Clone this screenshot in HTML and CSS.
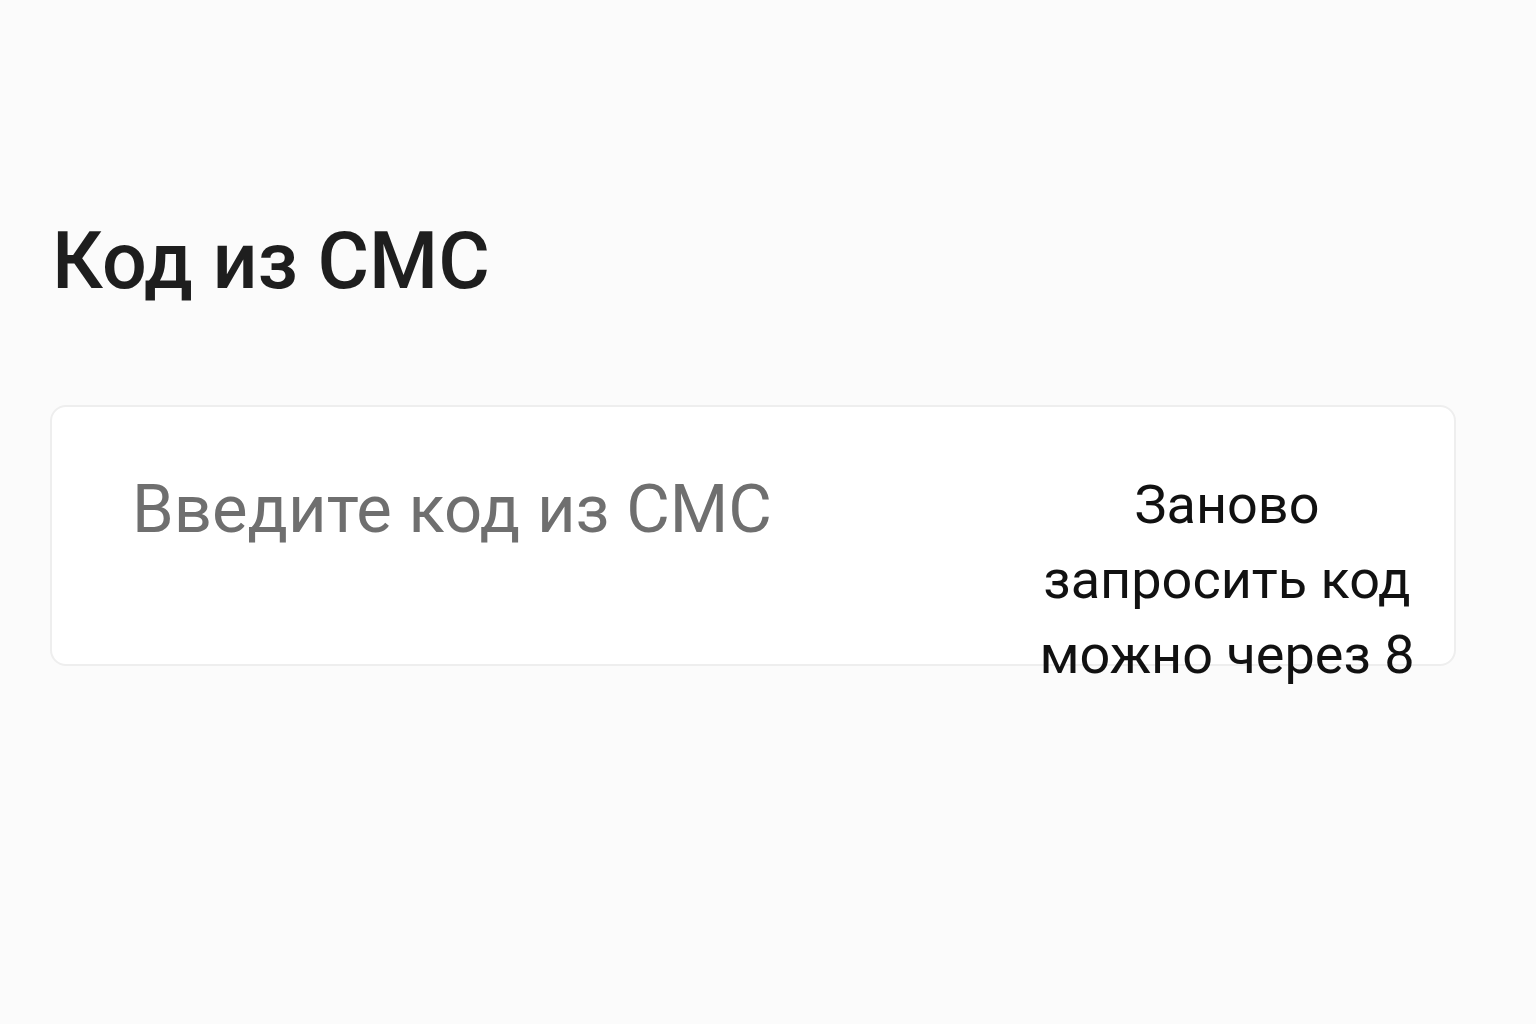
FILE: index.html
```html
<!DOCTYPE html>
<html lang="ru">
<head>
    <meta charset="UTF-8">
    <meta name="viewport" content="width=device-width, initial-scale=1.0">
    <title>Код из СМС</title>
    <link rel="stylesheet" href="styles.css">
</head>
<body>
    <main class="main">
        <h1 class="title">Код из СМС</h1>
        <div class="code-field">
            <div class="code-frame"></div>
            <div class="code-body">
                <input type="text" class="code-input" placeholder="Введите код из СМС">
                <div class="resend">Заново запросить код можно через 8</div>
            </div>
        </div>
    </main>
</body>
</html>
```

FILE: styles.css
```css
body {
    font-family: Roboto, 'Noto Sans', sans-serif;
    background-color: #fbfbfb;
    color: #1f1f1f;
    margin: 0;
}
.main {
    padding: 214px 80px 0 50px;
}
.title {
    font-size: 79px;
    font-weight: 500;
    margin: 0 0 96px 2px;
    line-height: 1.2;
    color: #1e1e1e;
}
.code-field {
    display: grid;
}
.code-frame {
    grid-area: 1 / 1;
    align-self: start;
    height: 257px;
    background-color: #fff;
    border: 2px solid #eeeeee;
    border-radius: 16px;
}
.code-body {
    grid-area: 1 / 1;
    display: flex;
    align-items: flex-start;
    padding: 64px 34px 0 82px;
}
.code-input {
    flex: 1;
    min-width: 0;
    border: none;
    outline: none;
    background: transparent;
    font-family: Roboto, 'Noto Sans', sans-serif;
    font-size: 67px;
    color: #222;
    padding: 0;
    margin: 0;
    height: 80px;
}
.code-input::placeholder {
    color: #6f6f6f;
}
.resend {
    flex: none;
    width: 390px;
    margin-top: -2px;
    font-size: 54px;
    line-height: 75px;
    text-align: center;
    color: #111;
}
```
